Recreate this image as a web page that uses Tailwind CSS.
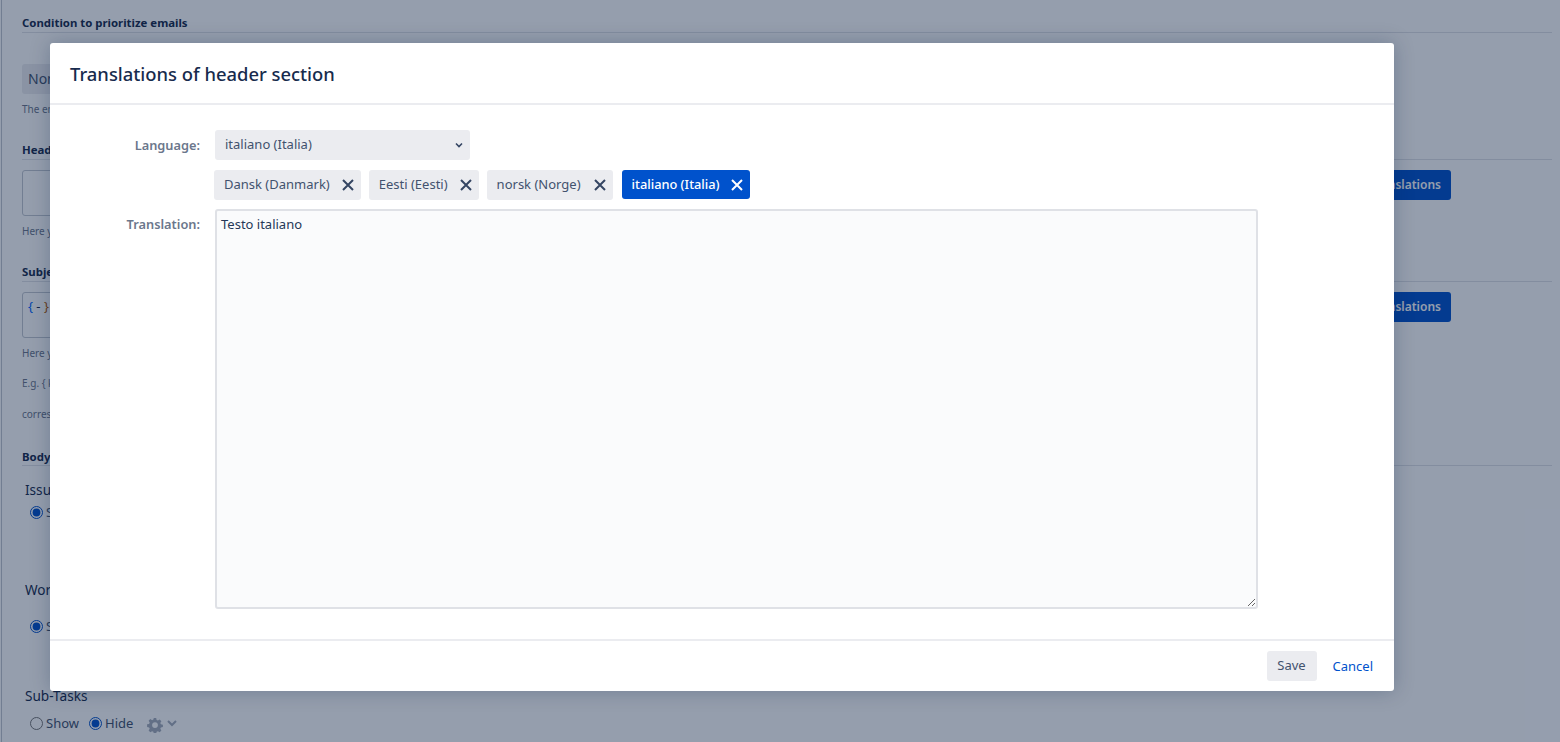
<!DOCTYPE html>
<html lang="en">
<head>
    <meta charset="UTF-8">
    <title>Translations of header section</title>
    <script src="https://cdn.jsdelivr.net/npm/@tailwindcss/browser@4"></script>
</head>
<body class="bg-white font-['Noto_Sans',sans-serif] text-[#172b4d] h-[742px] overflow-hidden relative">
    <!-- Page behind the dialog -->
    <div class="ml-[1px] border-l border-[#c1c7d0] h-[742px] pl-[20px] pr-[8px] pt-[15px] text-[14px]">
        <h3 class="text-[11.4px] leading-[16px] font-bold border-b border-[#dfe1e6] pb-[1px]">Condition to prioritize emails</h3>
        <div class="mt-[31px] h-[30px] w-[200px] rounded-[3px] bg-[#ebecf0] px-[6px] leading-[30px] text-[#42526e]">None</div>
        <p class="mt-[8px] text-[10px] leading-[14px] text-[#6b778c]">The email priority</p>

        <h3 class="mt-[26px] text-[11.4px] leading-[16px] font-bold border-b border-[#dfe1e6] pb-[1px]">Header</h3>
        <div class="mt-[10px] flex items-start justify-between pr-[101px]">
            <div class="h-[46px] w-[400px] rounded-[3px] border border-[#c1c7d0]"></div>
            <button class="h-[30px] rounded-[3px] bg-[#0052cc] px-[10px] text-[12px] font-semibold text-white">Add translations</button>
        </div>
        <p class="mt-[8px] text-[10px] leading-[14px] text-[#6b778c]">Here you can</p>

        <h3 class="mt-[26px] text-[11.4px] leading-[16px] font-bold border-b border-[#dfe1e6] pb-[1px]">Subject</h3>
        <div class="mt-[10px] flex items-start justify-between pr-[101px]">
            <div class="h-[46px] w-[400px] rounded-[3px] border border-[#c1c7d0] px-[5px] py-[3px] text-[13px] leading-[20px]"><span class="text-[#0065ff]">{</span> - <span class="text-[#b35900]">}</span></div>
            <button class="h-[30px] rounded-[3px] bg-[#0052cc] px-[10px] text-[12px] font-semibold text-white">Add translations</button>
        </div>
        <p class="mt-[8px] text-[10px] leading-[14px] text-[#6b778c]">Here you can</p>
        <p class="mt-[16px] text-[10px] leading-[14px] text-[#6b778c]">E.g. { key }</p>
        <p class="mt-[17px] text-[10px] leading-[14px] text-[#6b778c]">corresponding</p>

        <h3 class="mt-[28px] text-[11.4px] leading-[16px] font-bold border-b border-[#dfe1e6]">Body</h3>
        <div class="mt-[15px] pl-[3px] text-[13.6px] leading-[18px]">Issue</div>
        <div class="mt-[4px] ml-[8px] flex items-center gap-[3px] text-[13px] leading-[18px] text-[#42526e]">
            <input type="radio" checked class="h-[13px] w-[13px] accent-[#0052cc]"> Show
        </div>
        <div class="mt-[60px] pl-[3px] text-[13.6px] leading-[18px]">Worklog</div>
        <div class="mt-[18px] ml-[8px] flex items-center gap-[3px] text-[13px] leading-[18px] text-[#42526e]">
            <input type="radio" checked class="h-[13px] w-[13px] accent-[#0052cc]"> Show
        </div>
        <div class="mt-[52px] pl-[3px] text-[13.6px] leading-[18px]">Sub-Tasks</div>
        <div class="mt-[8px] ml-[8px] flex items-center text-[13px] leading-[18px] text-[#42526e]">
            <input type="radio" class="h-[13px] w-[13px] mr-[3px]"> Show
            <input type="radio" checked class="h-[13px] w-[13px] ml-[10px] mr-[3px] accent-[#0052cc]"> Hide
            <svg class="ml-[14px] mt-[4px] text-[#a5adba]" width="16" height="16" viewBox="0 0 16 16" fill="currentColor"><path fill-rule="evenodd" d="M6.8 1h2.4l.4 2 1.3.6 1.8-1.1 1.7 1.7-1.1 1.8.6 1.3 2 .4v2.4l-2 .4-.6 1.3 1.1 1.8-1.7 1.7-1.8-1.1-1.3.6-.4 2H6.8l-.4-2-1.3-.6-1.8 1.1-1.7-1.7 1.1-1.8-.6-1.3-2-.4V7.3l2-.4.6-1.3-1.1-1.8 1.7-1.7 1.8 1.1 1.3-.6zM8 5.2a2.9 2.9 0 1 0 0 5.8 2.9 2.9 0 0 0 0-5.8z"/></svg>
            <svg class="ml-[4px] text-[#a5adba]" width="10" height="8" viewBox="0 0 10 8" fill="none" stroke="currentColor" stroke-width="2"><path d="M1 2l4 4 4-4"/></svg>
        </div>
    </div>

    <!-- Blanket -->
    <div class="absolute inset-0 bg-[#091e42]/43"></div>

    <!-- Dialog -->
    <div class="absolute left-[50px] top-[43px] flex h-[648px] w-[1344px] flex-col rounded-[3px] bg-white shadow-[0_0_20px_rgba(9,30,66,0.25)] text-[13px]">
        <header class="flex h-[62px] items-center border-b-2 border-[#ebecf0] px-[20px] pt-[1px] shrink-0">
            <h2 class="text-[18.4px] font-medium text-[#172b4d]">Translations of header section</h2>
        </header>
        <div class="flex-1 pt-[25px]">
            <div class="flex items-center">
                <label class="w-[150px] shrink-0 pt-[1px] text-right text-[12.8px] font-semibold text-[#6b778c]">Language:</label>
                <div class="ml-[15px] flex h-[30px] w-[255px] items-center justify-between rounded-[3px] bg-[#ebecf0] pl-[10px] pr-[6px] text-[#42526e]">
                    <span>italiano (Italia)</span>
                    <svg width="10" height="8" viewBox="0 0 10 8" fill="none" stroke="#344563" stroke-width="1.6"><path d="M2 2.5l3 3 3-3"/></svg>
                </div>
            </div>
            <div class="mt-[10px] ml-[164px] flex items-start gap-[8px]">
                <span class="flex h-[30px] items-center gap-[12px] rounded-[3px] bg-[#ebecf0] pl-[10px] pr-[7px] text-[#42526e]">Dansk (Danmark)
                    <svg width="12" height="12" viewBox="0 0 12 12" stroke="#344563" stroke-width="2"><path d="M1 1l10 10M11 1L1 11"/></svg></span>
                <span class="flex h-[30px] items-center gap-[12px] rounded-[3px] bg-[#ebecf0] pl-[10px] pr-[7px] text-[#42526e]">Eesti (Eesti)
                    <svg width="12" height="12" viewBox="0 0 12 12" stroke="#344563" stroke-width="2"><path d="M1 1l10 10M11 1L1 11"/></svg></span>
                <span class="flex h-[30px] items-center gap-[13px] rounded-[3px] bg-[#ebecf0] pl-[10px] pr-[7px] text-[#42526e]">norsk (Norge)
                    <svg width="12" height="12" viewBox="0 0 12 12" stroke="#344563" stroke-width="2"><path d="M1 1l10 10M11 1L1 11"/></svg></span>
                <span class="ml-[1px] flex h-[29px] items-center gap-[11px] rounded-[3px] bg-[#0052cc] pl-[10px] pr-[7px] text-[12.8px] font-medium text-white">italiano (Italia)
                    <svg width="12" height="12" viewBox="0 0 12 12" stroke="#ffffff" stroke-width="2"><path d="M1 1l10 10M11 1L1 11"/></svg></span>
            </div>
            <div class="mt-[9px] flex items-start">
                <label class="w-[150px] shrink-0 mt-[6px] text-right text-[12.8px] font-semibold text-[#6b778c]">Translation:</label>
                <textarea class="ml-[15px] h-[400px] w-[1043px] rounded-[3px] border-2 border-[#dfe1e6] bg-[#fafbfc] px-[4px] py-[3px] text-[13px] leading-[20px] text-[#253858]">Testo italiano</textarea>
            </div>
        </div>
        <footer class="flex h-[52px] items-center justify-end border-t-2 border-[#ebecf0] pr-[21px] pt-[1px] shrink-0">
            <button class="-mt-[1px] h-[30px] w-[50px] rounded-[3px] bg-[#ebecf0] text-[#42526e]">Save</button>
            <a href="#" class="ml-[16px] text-[#0052cc]">Cancel</a>
        </footer>
    </div>
</body>
</html>
